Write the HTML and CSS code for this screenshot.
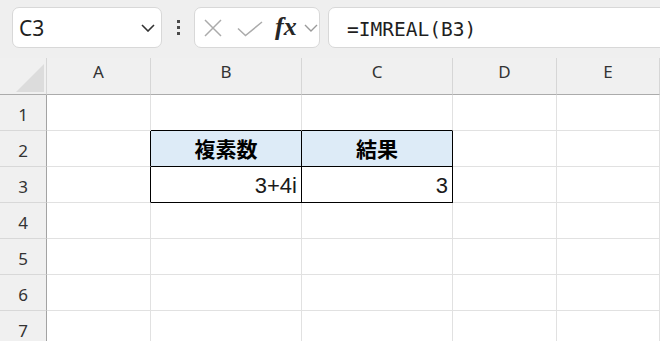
FILE: index.html
```html
<!DOCTYPE html>
<html>
	<head>
		<meta charset="UTF-8">
		<title>IMREAL</title>
		<link rel="stylesheet" href="styles.css">
	</head>
	<body>
		<section class="toolbar">
			<div class="namebox">
				<span>C3</span>
				<svg width="14" height="8" viewBox="0 0 14 8"><polyline points="1,1 7,7 13,1" fill="none" stroke="#333" stroke-width="1.6"/></svg>
			</div>
			<div class="more"><i></i><i></i><i></i></div>
			<div class="fxbox">
				<svg class="cancel" width="18" height="18" viewBox="0 0 18 18"><path d="M1 1L17 17M17 1L1 17" stroke="#ababab" stroke-width="1.5"/></svg>
				<svg class="enter" width="26" height="16" viewBox="0 0 26 16"><polyline points="1,7.5 8.5,14.5 25,1" fill="none" stroke="#ababab" stroke-width="1.5"/></svg>
				<span class="fx">fx</span>
				<svg width="14" height="8" viewBox="0 0 14 8"><polyline points="1,1 7,7 13,1" fill="none" stroke="#9a9a9a" stroke-width="1.4"/></svg>
			</div>
			<div class="formula">=IMREAL(B3)</div>
		</section>

		<section class="sheet">
			<div class="row head">
				<div class="corner"><i></i></div>
				<div>A</div>
				<div>B</div>
				<div>C</div>
				<div>D</div>
				<div>E</div>
			</div>
			<div class="row">
				<div class="num">1</div>
				<div></div>
				<div class="above"></div>
				<div class="above"></div>
				<div></div>
				<div></div>
			</div>
			<div class="row">
				<div class="num">2</div>
				<div class="before"></div>
				<div class="box title">複素数</div>
				<div class="box title">結果</div>
				<div></div>
				<div></div>
			</div>
			<div class="row">
				<div class="num">3</div>
				<div class="before"></div>
				<div class="box val">3+4i</div>
				<div class="box val">3</div>
				<div></div>
				<div></div>
			</div>
			<div class="row">
				<div class="num">4</div>
				<div></div><div></div><div></div><div></div><div></div>
			</div>
			<div class="row">
				<div class="num">5</div>
				<div></div><div></div><div></div><div></div><div></div>
			</div>
			<div class="row">
				<div class="num">6</div>
				<div></div><div></div><div></div><div></div><div></div>
			</div>
			<div class="row">
				<div class="num">7</div>
				<div></div><div></div><div></div><div></div><div></div>
			</div>
		</section>
	</body>
</html>
```

FILE: styles.css
```css
body{
	margin: 0;
	background: #fff;
	font-family: "Noto Sans", sans-serif;
	overflow: hidden;
}

/* 上のバー */
.toolbar{
	height: 58px;
	box-sizing: border-box;
	padding: 7px 0 0 12px;
	background: #efefef;
	display: flex;
	align-items: flex-start;
}
.namebox,.fxbox,.formula{
	height: 41px;
	box-sizing: border-box;
	background: #fff;
	border: 1px solid #d8d8d8;
	border-radius: 7px;
	display: flex;
	align-items: center;
}
.namebox{
	width: 150px;
	padding: 0 6px 0 6px;
	justify-content: space-between;
}
.namebox span{
	font-size: 21px;
	color: #1f1f1f;
	line-height: 1;
	padding-top: 2px;
}
.more{
	width: 32px;
	height: 41px;
	display: flex;
	flex-direction: column;
	align-items: center;
	justify-content: center;
	gap: 3px;
}
.more i{
	display: block;
	width: 3px;
	height: 3px;
	background: #4a4a4a;
}
.fxbox{
	width: 126px;
	padding: 0 0 0 9px;
}
.enter{
	margin-left: 15px;
	margin-top: 2px;
}
.fx{
	margin-left: 12px;
	font-family: "Liberation Serif", serif;
	font-style: italic;
	font-weight: 700;
	font-size: 26px;
	color: #262626;
	line-height: 1;
	padding-bottom: 2px;
}
.fxbox svg:last-child{
	margin-left: 7px;
}
.formula{
	flex: 1;
	margin: 0 -10px 0 8px;
	padding: 3px 0 0 18px;
	font-family: "DejaVu Sans Mono", monospace;
	font-size: 19.5px;
	color: #1f1f1f;
}

/* シート */
.row{
	display: grid;
	grid-template-columns: 47px 104px 151px 151px 104px 1fr;
	height: 36px;
}
.row>div{
	box-sizing: border-box;
	border-right: 1px solid #e1e1e1;
	border-bottom: 1px solid #e1e1e1;
	display: flex;
	align-items: center;
}
.head{
	height: 37px;
	background: #f0f0f0;
}
.head>div{
	border-right-color: #d6d6d6;
	border-bottom-color: #ababab;
	justify-content: center;
	padding-bottom: 9px;
	font-size: 17px;
	color: #333;
}
.head>.corner{
	justify-content: flex-end;
	align-items: flex-end;
	padding: 0 2px 2px 0;
}
.corner i{
	display: block;
	width: 28px;
	height: 28px;
	background: #dcdcdc;
	clip-path: polygon(100% 0,100% 100%,0 100%);
}
.row>.num{
	background: #f0f0f0;
	border-right-color: #a3a3a3;
	border-bottom-color: #d8d8d8;
	justify-content: center;
	padding-top: 3px;
	font-size: 17px;
	color: #333;
}

/* 表の罫線 */
.row>.above{
	border-bottom-color: #000;
}
.row>.before{
	border-right-color: #000;
}
.row>.box{
	border-right-color: #000;
	border-bottom-color: #000;
}
.title{
	background: #ddebf7;
	justify-content: center;
	font-family: "Noto Sans CJK JP", sans-serif;
	font-weight: 700;
	font-size: 21px;
	line-height: 1;
	color: #000;
}
.val{
	justify-content: flex-end;
	padding: 2px 4px 0 0;
	font-family: "Liberation Sans", sans-serif;
	font-size: 22px;
	line-height: 1;
	color: #1a1a1a;
}
```
